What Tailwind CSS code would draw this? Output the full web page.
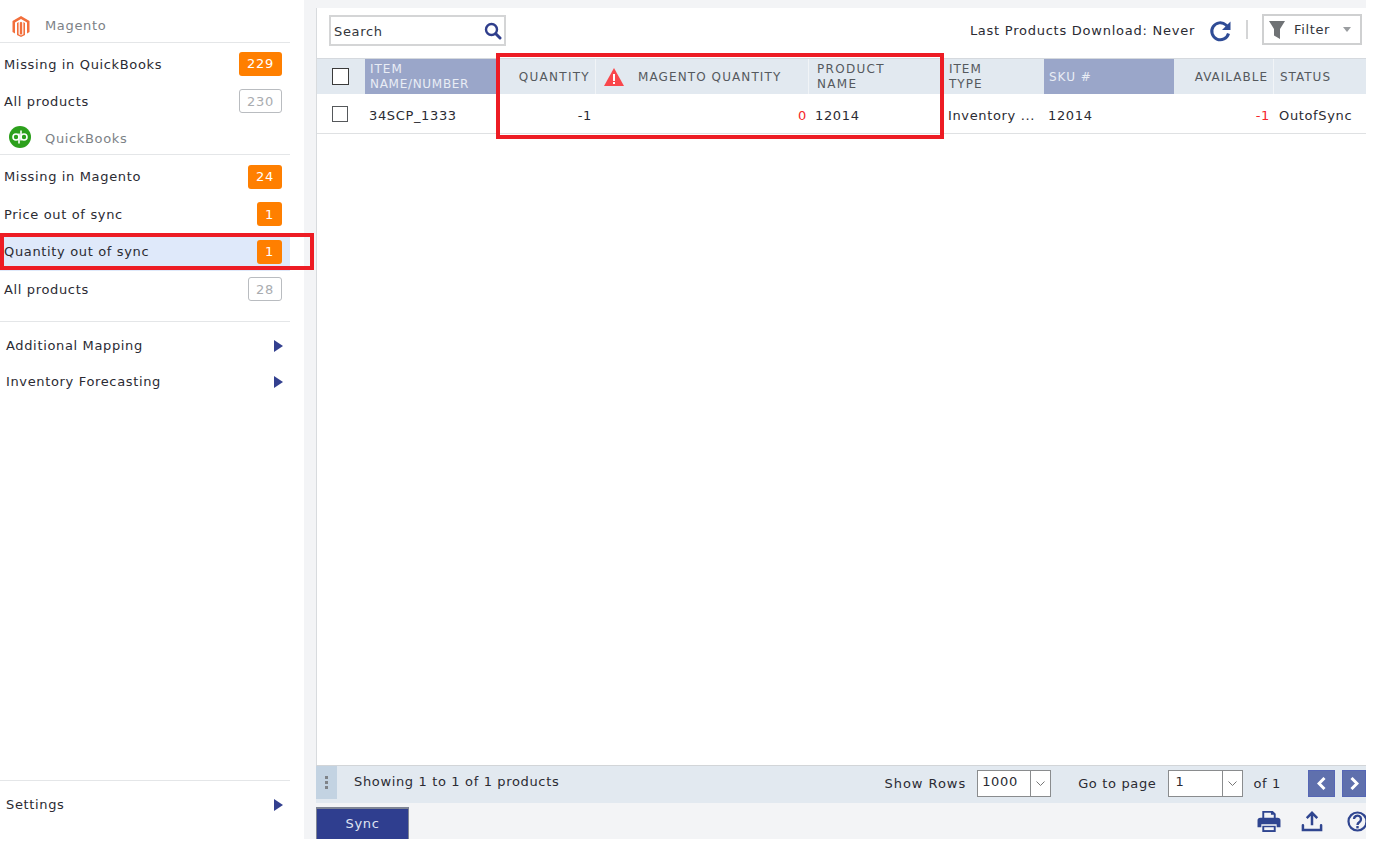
<!DOCTYPE html>
<html lang="en">
  <head>
    <meta charset="UTF-8" />
    <title>Products</title>
    <script src="https://cdn.jsdelivr.net/npm/@tailwindcss/browser@4"></script>
  </head>
  <body class="bg-white">
    <div class="relative flex h-[849px] w-[1390px] overflow-hidden bg-white font-['DejaVu_Sans',sans-serif] text-[13px] tracking-[0.65px] text-[#2b2b33]">
      <!-- sidebar -->
      <aside class="flex h-[839px] w-[304px] flex-col">
        <div class="w-[290px] flex-1 flex flex-col">
          <div class="flex h-[43px] items-center border-b border-[#e4e6e8] pt-[10px] text-[#7d8287]">
            <svg class="ml-[11px] mr-[14px] h-[21px] w-[20px]" viewBox="0 0 20 21">
              <path fill="#f26f3c" d="M10 0 18.5 5V16L16 17.5V6.5L10 3 4 6.5V17.5L1.500 16V5Z" />
              <path fill="#f26f3c" d="M8.800 6.500 10 5.800 11.200 6.500V18L10 18.700 8.800 18V6.500Z" />
              <path fill="#f26f3c" d="M6 6.900 7.600 6V18.200L10 19.600 12.400 18.200V6L14 6.900V19L10 21 6 19Z" />
            </svg>
            <span>Magento</span>
          </div>
          <div class="h-[2px]"></div>
          <div class="flex h-[37.5px] items-center justify-between pl-1 pr-2">
            <span class="mt-[1px]">Missing in QuickBooks</span>
            <span class="flex h-6 w-[43px] items-center justify-center rounded-[3px] bg-[#ff7f00] text-white">229</span>
          </div>
          <div class="flex h-[37.5px] items-center justify-between pl-1 pr-2">
            <span>All products</span>
            <span class="flex h-6 w-[43px] items-center justify-center rounded-[3px] border border-[#b9bcc0] text-[#a9acb0]">230</span>
          </div>
          <div class="flex h-[35px] items-center border-b border-[#e4e6e8] text-[#7d8287]">
            <svg class="ml-[9px] mr-[14px] h-[22px] w-[22px]" viewBox="0 0 22 22">
              <circle cx="11" cy="11" r="11" fill="#2ca01c" />
              <g fill="none" stroke="#fff" stroke-width="1.600">
                <circle cx="7" cy="11" r="3" />
                <path d="M10 7.500V17.500" />
                <circle cx="15" cy="11" r="3" />
                <path d="M12 4.500V14.500" />
              </g>
            </svg>
            <span class="mt-[3px]">QuickBooks</span>
          </div>
          <div class="h-[3px]"></div>
          <div class="flex h-[37.5px] items-center justify-between pl-1 pr-2">
            <span>Missing in Magento</span>
            <span class="flex h-6 w-[34px] items-center justify-center rounded-[3px] bg-[#ff7f00] text-white">24</span>
          </div>
          <div class="flex h-[37.5px] items-center justify-between pl-1 pr-2">
            <span>Price out of sync</span>
            <span class="flex h-6 w-[25px] items-center justify-center rounded-[3px] bg-[#ff7f00] text-white">1</span>
          </div>
          <div class="flex h-[37.5px] items-center justify-between bg-[#dfe9fa] pl-1 pr-2">
            <span>Quantity out of sync</span>
            <span class="flex h-6 w-[25px] items-center justify-center rounded-[3px] bg-[#ff7f00] text-white">1</span>
          </div>
          <div class="flex h-[37.5px] items-center justify-between pl-1 pr-2">
            <span>All products</span>
            <span class="flex h-6 w-[34px] items-center justify-center rounded-[3px] border border-[#b9bcc0] text-[#a9acb0]">28</span>
          </div>
          <div class="mt-[13px] border-t border-[#e4e6e8] pt-[6px]">
            <div class="flex h-9 items-center justify-between pl-[6px] pr-[7px]">
              <span>Additional Mapping</span>
              <svg class="h-3 w-[9px]" viewBox="0 0 9 12"><path fill="#33408f" d="M0 0 9 6 0 12Z" /></svg>
            </div>
            <div class="flex h-9 items-center justify-between pl-[6px] pr-[7px]">
              <span>Inventory Forecasting</span>
              <svg class="h-3 w-[9px]" viewBox="0 0 9 12"><path fill="#33408f" d="M0 0 9 6 0 12Z" /></svg>
            </div>
          </div>
          <div class="mt-auto mb-[12px] flex h-[47px] items-center justify-between border-t border-[#e4e6e8] pl-[6px] pr-[7px] pt-[1px]">
            <span>Settings</span>
            <svg class="h-3 w-[9px]" viewBox="0 0 9 12"><path fill="#33408f" d="M0 0 9 6 0 12Z" /></svg>
          </div>
        </div>
      </aside>

      <!-- main -->
      <main class="flex h-[839px] w-[1062px] flex-col bg-[#f3f4f6] pl-3 pt-2">
        <div class="flex flex-1 flex-col border-l border-[#d8dbde] bg-white">
          <div class="flex h-[50px] items-start pl-3">
            <div class="mt-[7px] flex h-[31px] w-[177px] items-center justify-between border-2 border-[#d4d5d6] pl-[3px] pr-[2px]">
              <span class="mt-[2px] text-[#33363b]">Search</span>
              <svg class="h-[18px] w-[18px]" viewBox="0 0 18 18" fill="none" stroke="#2f3e8c" stroke-width="2.400">
                <circle cx="7.500" cy="7.500" r="5.500" />
                <path stroke-linecap="round" stroke-width="3" d="m12 12 4 4" />
              </svg>
            </div>
            <span class="ml-auto mt-[13px] tracking-[0.75px]">Last Products Download: Never</span>
            <svg class="ml-[14px] mt-[11px] h-6 w-6" viewBox="0 0 24 24" fill="none" stroke="#2f4c96" stroke-width="3">
              <path d="M19.500 14.500A8.500 8.500 0 1 1 17 6l2.500 2.500" />
              <path fill="#2f4c96" stroke="none" d="M21.500 2.500V11H13Z" />
            </svg>
            <div class="ml-[13px] mt-3 h-[19px] w-[2px] bg-[#d4d5d6]"></div>
            <div class="ml-[14px] mr-1 mt-[6px] flex h-[31px] w-[100px] items-center border-2 border-[#cfd0d1] pl-[5px] text-[#33363b]">
              <svg class="mr-[9px] h-[18px] w-4" viewBox="0 0 16 18"><path fill="#6f7275" d="M0 0H16L11 8V18L5 14.500V8Z" /></svg>
              <span>Filter</span>
              <svg class="ml-[13px] h-[5px] w-2" viewBox="0 0 8 5"><path fill="#9a9da0" d="M0 0H8L4 5Z" /></svg>
            </div>
          </div>

          <!-- table -->
          <div class="grid grid-cols-[48px_131px_100px_213px_136px_99px_130px_100px_92px] grid-rows-[35px_40px] border-t border-[#d5d9de]">
            <div class="flex items-center justify-center bg-[#e2e9f0]"><span class="mr-[1px] h-[17px] w-[17px] border-[1.5px] border-[#3a3a3a] bg-white"></span></div>
            <div class="bg-[#9aa6c9] pl-[5px] pt-[3px] text-[12px] leading-[15px] tracking-[0.7px] text-[#e9edf5]"><span class="tracking-[1px]">ITEM</span><br />NAME/NUMBER</div>
            <div class="flex items-center justify-end border-r border-[#f1f4f7] bg-[#e2e9f0] pr-[5px] text-[12px] tracking-[1.300px] text-[#55595e]">QUANTITY</div>
            <div class="flex items-center border-r border-[#f1f4f7] bg-[#e2e9f0] pl-2 text-[12px] tracking-[1.100px] text-[#55595e]">
              <svg class="mr-[14px] h-[18px] w-5" viewBox="0 0 20 18">
                <path fill="#f9474c" d="M10 0 20 18H0Z" />
                <path fill="#fff" d="M9 6h2v7H9ZM9 14h2v2H9Z" />
              </svg>
              <span>MAGENTO QUANTITY</span>
            </div>
            <div class="bg-[#e2e9f0] pl-2 pt-[3px] text-[12px] leading-[15px] tracking-[1.300px] text-[#55595e]">PRODUCT<br />NAME</div>
            <div class="bg-[#e2e9f0] pl-[4px] pt-[3px] text-[12px] leading-[15px] tracking-[1px] text-[#55595e]">ITEM<br />TYPE</div>
            <div class="flex items-center bg-[#9aa6c9] pl-[5px] text-[12px] tracking-[1px] text-[#e9edf5]">SKU #</div>
            <div class="flex items-center justify-end border-r border-[#f1f4f7] bg-[#e2e9f0] pr-[5px] text-[12px] tracking-[1px] text-[#55595e]">AVAILABLE</div>
            <div class="flex items-center bg-[#e2e9f0] pl-[6px] text-[12px] tracking-[1px] text-[#55595e]">STATUS</div>

            <div class="flex items-center justify-center border-b border-[#dfe1e3]"><span class="mr-[2px] h-4 w-4 border-[1.5px] border-[#55585b]"></span></div>
            <div class="flex items-center border-b border-[#dfe1e3] pl-1 pt-[4px]">34SCP_1333</div>
            <div class="flex items-center justify-end border-b border-[#dfe1e3] pr-1 pt-[4px]">-1</div>
            <div class="flex items-center justify-end border-b border-[#dfe1e3] pr-[2px] pt-[4px] text-[#f5272b]">0</div>
            <div class="flex items-center border-b border-[#dfe1e3] pl-[6px] pt-[4px]">12014</div>
            <div class="flex items-center border-b border-[#dfe1e3] pl-[3px] pt-[4px]">Inventory ...</div>
            <div class="flex items-center border-b border-[#dfe1e3] pl-1 pt-[4px]">12014</div>
            <div class="flex items-center justify-end border-b border-[#dfe1e3] pr-1 pt-[4px] text-[#f5272b]">-1</div>
            <div class="flex items-center border-b border-[#dfe1e3] pl-[5px] pt-[4px]">OutofSync</div>
          </div>
        </div>

        <!-- pager -->
        <div class="flex h-[38px] items-start border-t border-[#d2d5d8] bg-[#e2e9f0]">
          <div class="flex h-[33px] w-[21px] flex-col items-center justify-center gap-[2px] bg-[#c3d3e2]">
            <span class="h-[3px] w-[3px] bg-[#7f8388]"></span>
            <span class="h-[3px] w-[3px] bg-[#7f8388]"></span>
            <span class="h-[3px] w-[3px] bg-[#7f8388]"></span>
          </div>
          <span class="ml-[17px] mt-[6px]">Showing 1 to 1 of 1 products</span>
          <span class="ml-auto mt-[8px] tracking-[0.95px]">Show Rows</span>
          <div class="ml-[11px] mt-1 flex h-[27px] w-[74px] border border-[#8a8c8e] bg-white">
            <span class="flex-1 pl-1 leading-[22px]">1000</span>
            <span class="flex w-5 items-center justify-center border-l border-[#8a8c8e]">
              <svg class="h-[5px] w-[9px]" viewBox="0 0 9 5" fill="none" stroke="#777"><path d="m.5.500 4 4 4-4" /></svg>
            </span>
          </div>
          <span class="ml-[27px] mt-[8px]">Go to page</span>
          <div class="ml-3 mt-1 flex h-[27px] w-[75px] border border-[#8a8c8e] bg-white">
            <span class="flex-1 pl-[6px] leading-[22px]">1</span>
            <span class="flex w-5 items-center justify-center border-l border-[#8a8c8e]">
              <svg class="h-[5px] w-[9px]" viewBox="0 0 9 5" fill="none" stroke="#777"><path d="m.5.500 4 4 4-4" /></svg>
            </span>
          </div>
          <span class="ml-[10px] mt-[8px]">of 1</span>
          <div class="ml-[27px] mt-1 flex h-[27px] w-[27px] items-center justify-center border border-[#5566b5] bg-[#5f70ad]">
            <svg class="h-[13px] w-[9px]" viewBox="0 0 9 13" fill="none" stroke="#fff" stroke-width="3"><path d="M7.500 1 2 6.500 7.500 12" /></svg>
          </div>
          <div class="ml-[7px] mt-1 flex h-[27px] w-6 items-center justify-center border border-[#5566b5] bg-[#5f70ad]">
            <svg class="h-[13px] w-[9px]" viewBox="0 0 9 13" fill="none" stroke="#fff" stroke-width="3"><path d="M1.500 1 7 6.500 1.500 12" /></svg>
          </div>
        </div>

        <!-- actions -->
        <div class="flex h-9 items-end">
          <div class="flex h-[32px] w-[93px] items-center justify-center border-x border-t-2 border-[#7f8594] bg-[#2f3e8f] text-[#dfe3f2]">Sync</div>
          <svg class="ml-auto mb-[7px] h-[22px] w-[24px]" viewBox="0 0 24 23" fill="#2f4590">
            <path d="M5 1h11l3 3v5h-2V5h-3V3H7v6H5Z" />
            <path d="M3 8h18a3 3 0 0 1 3 3v7h-4v-3H4v3H0v-7a3 3 0 0 1 3-3Z" />
            <path d="M5 16.500h14V23H5Z" />
            <path fill="#f3f4f6" d="M7 18h10v3H7Z" />
          </svg>
          <svg class="ml-[20px] mb-[7px] h-[22px] w-[22px]" viewBox="0 0 22 23" fill="none" stroke="#2f4590" stroke-width="2.600">
            <path d="M11 16V3M5.500 8.500 11 3l5.500 5.500" />
            <path stroke-linecap="round" d="M1.500 16v5h19v-5" />
          </svg>
          <div class="ml-[24px] mb-[7px] w-[19px] overflow-hidden">
            <svg class="h-[21px] w-[21px] max-w-none" viewBox="0 0 21 21" fill="none" stroke="#2f4590" stroke-width="2.200">
              <circle cx="10.500" cy="10.500" r="9" />
              <path stroke-width="2.400" d="M7 8a3.500 3.500 0 1 1 5.500 3c-1.500 1-2 1.500-2 3" />
              <path stroke-width="2.400" d="M10.500 15v2.400" />
            </svg>
          </div>
        </div>
      </main>

      <!-- red call-out frames -->
      <div class="absolute left-0 top-[233px] h-[37px] w-[314px] border-[4px] border-[#ed1c24]"></div>
      <div class="absolute left-[496px] top-[53px] h-[86px] w-[448px] border-[4px] border-[#ed1c24]"></div>
    </div>
  </body>
</html>
